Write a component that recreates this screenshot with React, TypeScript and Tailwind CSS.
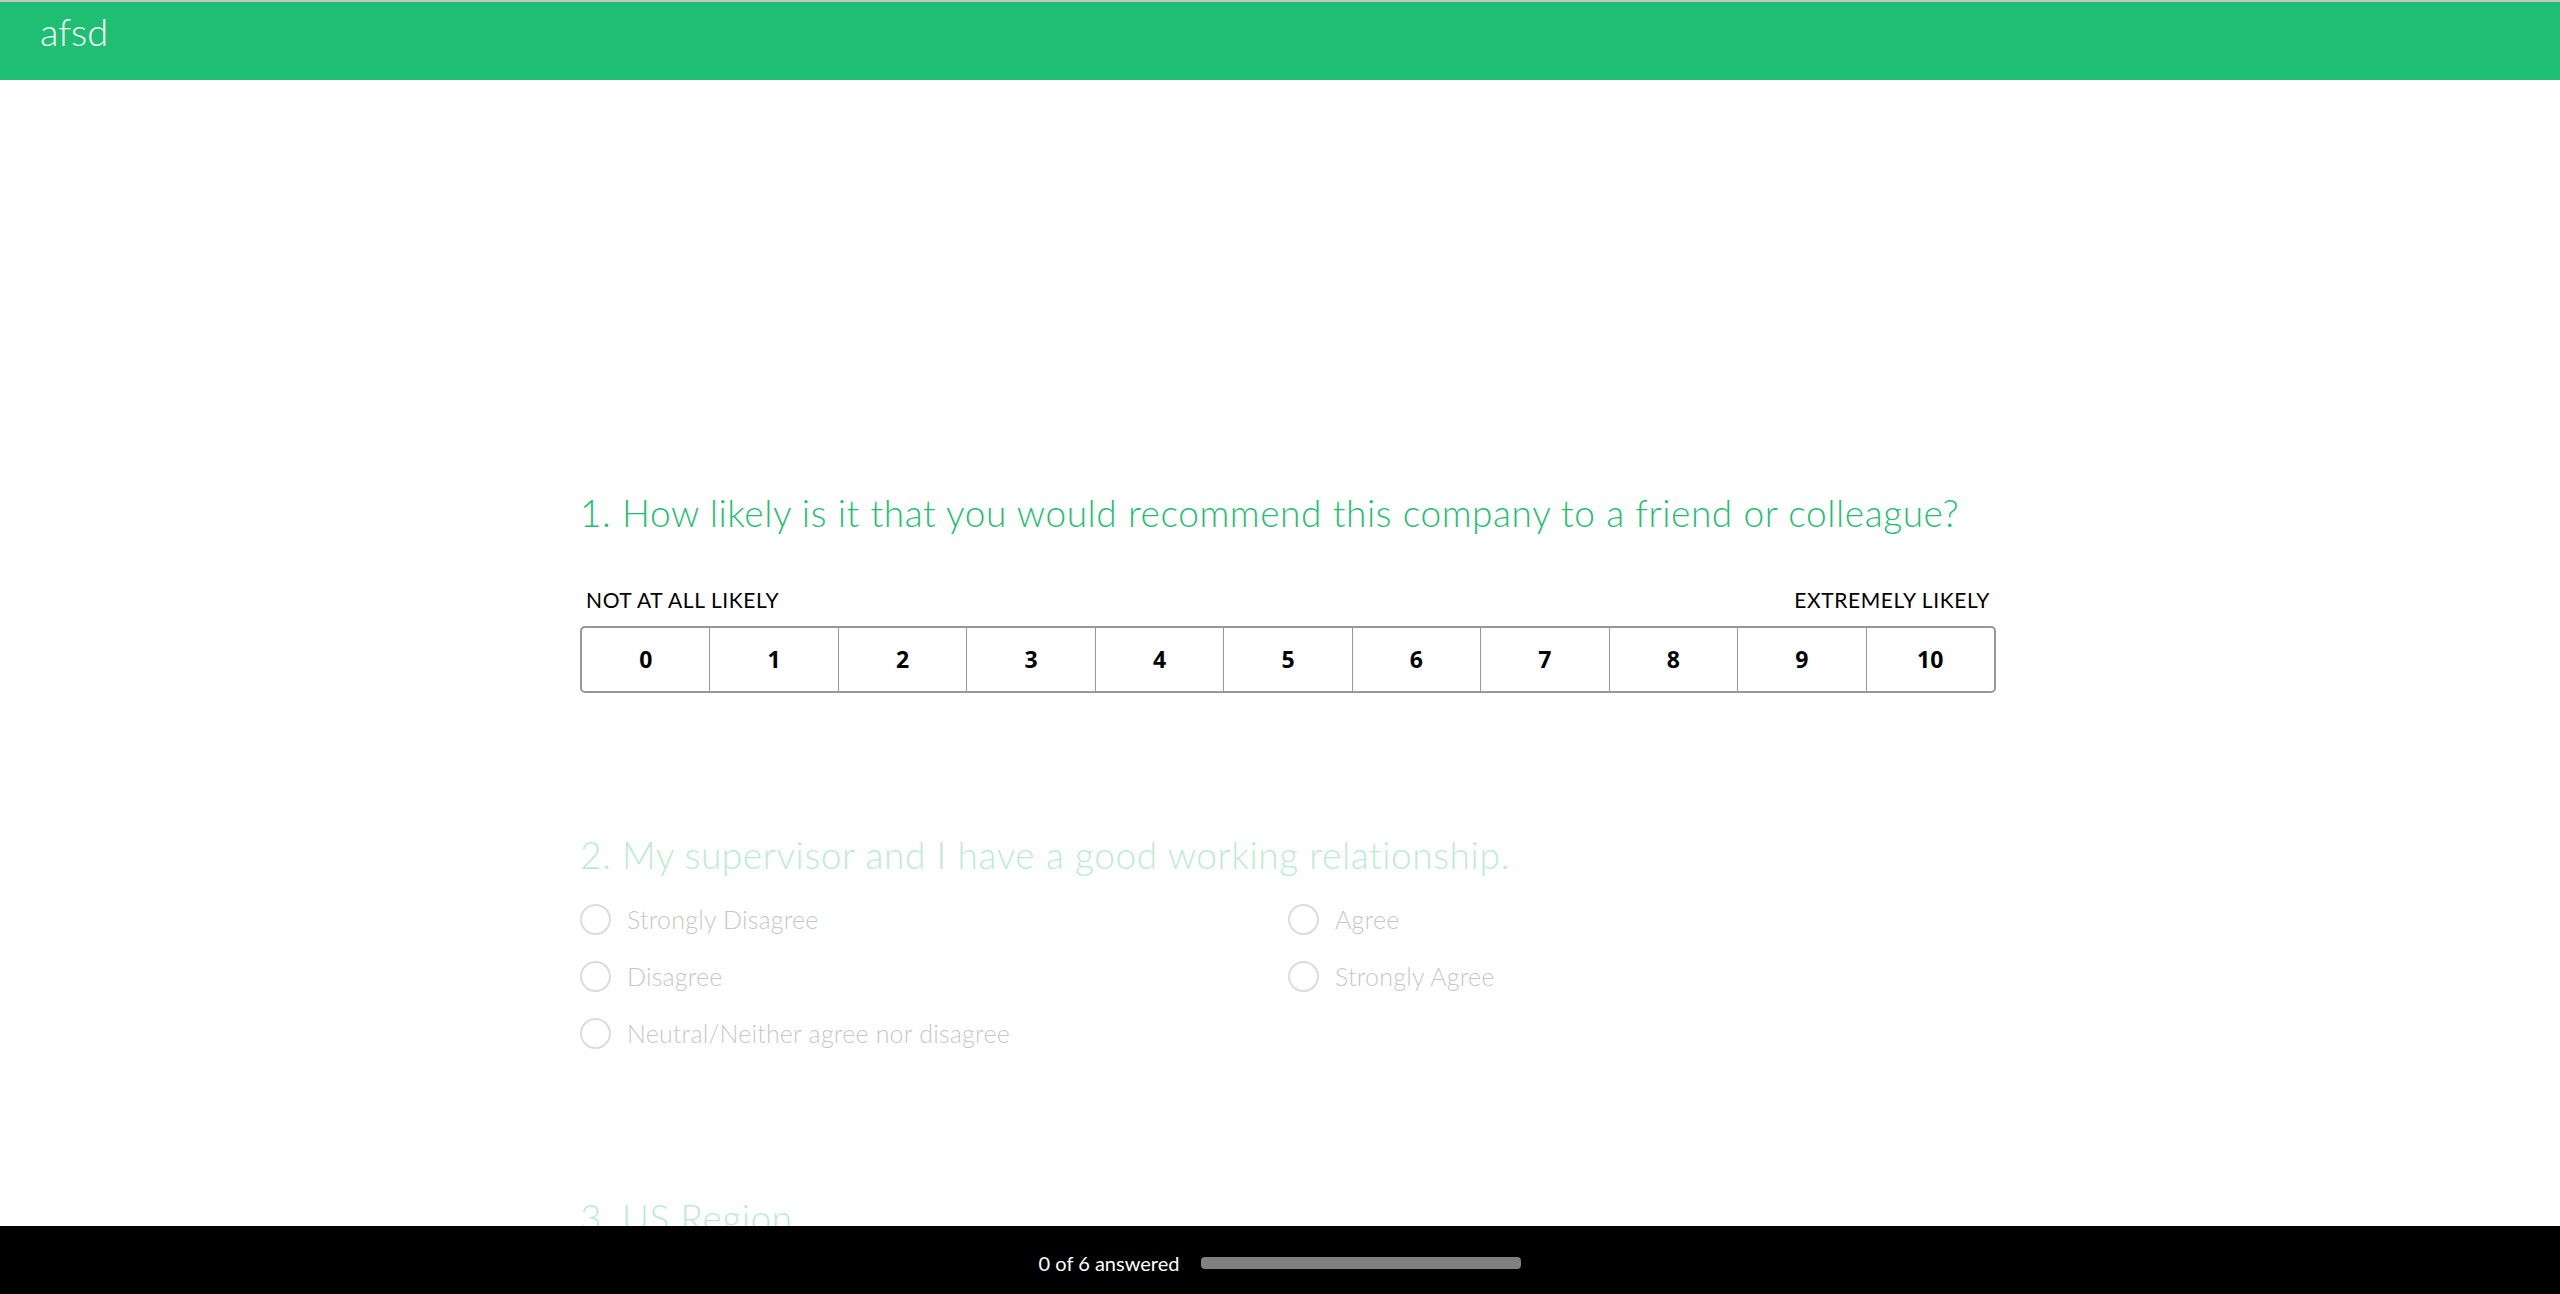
const scale = Array.from({ length: 11 }, (_, i) => i);

const leftOptions = ["Strongly Disagree", "Disagree", "Neutral/Neither agree nor disagree"];
const rightOptions = ["Agree", "Strongly Agree"];

const Radio = ({ label }: { label: string }) => (
  <label className="flex items-center gap-4 h-[57px]">
    <span className="w-[31px] h-[31px] rounded-full border-2 border-[#8f8f8f] shrink-0"></span>
    <span className="text-[25px] tracking-[0.2px] text-[#444]">{label}</span>
  </label>
);

const App = () => {
  return (
    <div className="min-h-[1294px] bg-white font-['Lato','Open_Sans',sans-serif] font-light">
      <header className="h-[80px] bg-[#1fbf73] border-t-2 border-[#c4c4c4] flex items-start px-10">
        <h1 className="text-white text-[38px] leading-[58px] font-light">afsd</h1>
      </header>

      <main className="mx-auto w-[1432px] pl-4 pt-[408px]">
        <section>
          <h2 className="text-[#1fbf73] text-[37px] leading-[50px] tracking-[0.6px]">
            1. How likely is it that you would recommend this company to a friend or colleague?
          </h2>
          <div className="flex justify-between mt-[50px] px-[6px] text-[21px] leading-[24px] font-normal text-black tracking-[0.6px]">
            <span>NOT AT ALL LIKELY</span>
            <span>EXTREMELY LIKELY</span>
          </div>
          <div className="mt-[14px] flex h-[67px] border-2 border-[#979797] rounded-[5px] overflow-hidden">
            {scale.map((n) => (
              <button
                key={n}
                className="flex-1 flex items-center justify-center border-l-[1.5px] first:border-l-0 border-[#979797] text-[23px] font-bold text-black font-['Open_Sans',sans-serif]"
              >
                {n}
              </button>
            ))}
          </div>
        </section>

        <section className="mt-[137px] opacity-30">
          <h2 className="text-[#1fbf73] text-[37px] leading-[50px] tracking-[0.6px]">
            2. My supervisor and I have a good working relationship.
          </h2>
          <div className="mt-[11px] grid grid-cols-2 w-[1416px]">
            <div className="flex flex-col">
              {leftOptions.map((o) => (
                <Radio key={o} label={o} />
              ))}
            </div>
            <div className="flex flex-col">
              {rightOptions.map((o) => (
                <Radio key={o} label={o} />
              ))}
            </div>
          </div>
        </section>

        <section className="mt-[131px] opacity-30">
          <h2 className="text-[#1fbf73] text-[37px] leading-[50px] tracking-[0.6px]">3. US Region</h2>
        </section>
      </main>

      <footer className="fixed bottom-0 left-0 right-0 h-[68px] pt-[6px] bg-black flex items-center justify-center gap-[22px]">
        <span className="text-white text-[20px] font-normal font-['Lato',sans-serif]">0 of 6 answered</span>
        <div className="w-[320px] h-[12px] rounded-[4px] bg-[#808080]"></div>
      </footer>
    </div>
  );
};

export default App;
